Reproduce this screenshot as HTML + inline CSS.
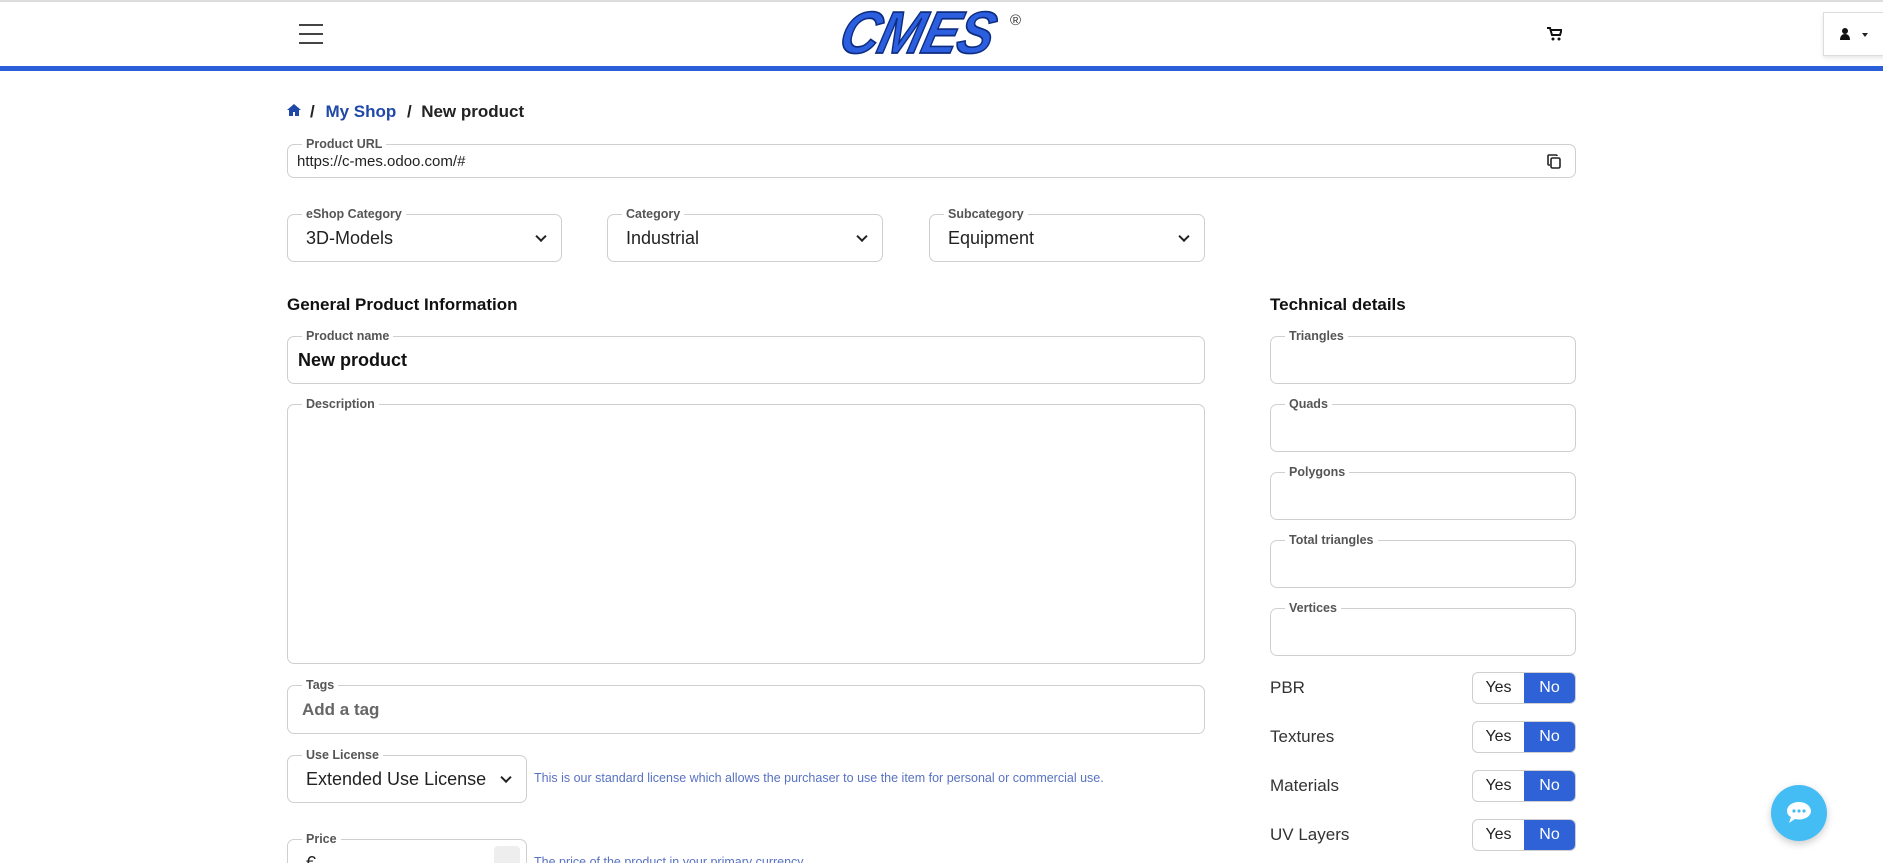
<!DOCTYPE html>
<html style="width:1883px;height:863px;overflow:hidden"><head><meta charset="utf-8"><style>
*{box-sizing:border-box;margin:0;padding:0}
body{width:1883px;height:863px;overflow:hidden;background:#fff;font-family:"Liberation Sans",sans-serif;color:#222;position:relative}
.abs{position:absolute}
.fld{position:absolute;border:1px solid #cfcfcf;border-radius:7px;background:#fff}
.lbl{position:absolute;top:-9px;left:14px;background:#fff;padding:0 4px;font-size:12.5px;color:#555;font-weight:bold;line-height:16px}
.val{position:absolute;left:18px;font-size:18px;color:#222}
.chev{position:absolute;right:16px;top:50%;width:8px;height:8px;border-right:2.5px solid #222;border-bottom:2.5px solid #222;transform:translateY(-70%) rotate(45deg)}
.h{position:absolute;font-size:17px;font-weight:bold;color:#111}
.tg{position:absolute;left:1472px;width:104px;height:32px;border:1px solid #cfcfcf;border-radius:6px;overflow:hidden;display:flex;font-size:16px}
.tg div{flex:1;display:flex;align-items:center;justify-content:center}
.tg .n{background:#2e62d6;color:#fff}
.tl{position:absolute;left:1270px;font-size:17px;color:#333}
.help{position:absolute;font-size:12.5px;color:#5872c2}
</style></head><body>
<div class="abs" style="left:0;top:0;width:1883px;height:2px;background:#ddd"></div>
<div class="abs" style="left:0;top:66px;width:1883px;height:5px;background:#2b5fd9"></div>
<div class="abs" style="left:299px;top:24px;width:24px;height:2px;background:#444"></div>
<div class="abs" style="left:299px;top:33px;width:24px;height:2px;background:#444"></div>
<div class="abs" style="left:299px;top:42px;width:24px;height:2px;background:#444"></div>
<div class="abs" style="left:850px;top:0px;font-size:54px;font-weight:bold;font-style:italic;color:#2c5fe0;-webkit-text-stroke:1.5px #0d2d80;letter-spacing:-1px;transform:skewX(-14deg) scaleY(1.1);transform-origin:left top;line-height:60px">CMES</div>
<div class="abs" style="left:1010px;top:12px;font-size:15px;color:#333">®</div>
<svg class="abs" style="left:1547px;top:27px" width="15" height="14" viewBox="0 0 15 14"><path d="M0 1h3l2 7h8l1.5-5H4" fill="none" stroke="#111" stroke-width="2"/><circle cx="6" cy="12" r="1.5" fill="#111"/><circle cx="12" cy="12" r="1.5" fill="#111"/></svg>
<div class="abs" style="left:1823px;top:12px;width:62px;height:44px;border:1px solid #ddd;background:#fff;box-shadow:0 2px 4px rgba(0,0,0,.1)"></div>
<svg class="abs" style="left:1840px;top:28px" width="10" height="12" viewBox="0 0 10 12"><circle cx="5" cy="3" r="3" fill="#111"/><path d="M0 12c0-4 2-6 5-6s5 2 5 6z" fill="#111"/></svg>
<div class="abs" style="left:1862px;top:33px;border-left:3.5px solid transparent;border-right:3.5px solid transparent;border-top:4px solid #222"></div>
<svg class="abs" style="left:287px;top:104px" width="14" height="12" viewBox="0 0 14 12"><path d="M7 0L0 6h2v6h4V8h2v4h4V6h2z" fill="#1f48a8"/></svg>
<div class="abs" style="left:310px;top:102px;font-size:17px;font-weight:bold;color:#222">/ <span style="color:#1f48a8;margin:0 6px">My Shop</span> / &nbsp;New product</div>
<div class="fld" style="left:287px;top:144px;width:1289px;height:34px"><div class="lbl">Product URL</div><div class="val" style="left:9px;top:8px;font-size:15px">https://c-mes.odoo.com/#</div>
<svg class="abs" style="right:14px;top:9px" width="14" height="15" viewBox="0 0 14 15"><rect x="4" y="4" width="9" height="10" rx="1.5" fill="none" stroke="#222" stroke-width="1.6"/><path d="M10 2V1.8A1 1 0 0 0 9 1H2A1 1 0 0 0 1 2v8a1 1 0 0 0 1 1h1" fill="none" stroke="#222" stroke-width="1.6"/></svg></div>
<div class="fld" style="left:287px;top:214px;width:275px;height:48px"><div class="lbl">eShop Category</div><div class="val" style="top:13px">3D-Models</div><div class="chev"></div></div>
<div class="fld" style="left:607px;top:214px;width:276px;height:48px"><div class="lbl">Category</div><div class="val" style="top:13px">Industrial</div><div class="chev"></div></div>
<div class="fld" style="left:929px;top:214px;width:276px;height:48px"><div class="lbl">Subcategory</div><div class="val" style="top:13px">Equipment</div><div class="chev"></div></div>
<div class="h" style="left:287px;top:295px">General Product Information</div>
<div class="h" style="left:1270px;top:295px">Technical details</div>
<div class="fld" style="left:287px;top:336px;width:918px;height:48px"><div class="lbl">Product name</div><div class="val" style="left:10px;top:13px;font-weight:bold;color:#111">New product</div></div>
<div class="fld" style="left:287px;top:404px;width:918px;height:260px"><div class="lbl">Description</div></div>
<div class="fld" style="left:287px;top:685px;width:918px;height:49px"><div class="lbl">Tags</div><div class="val" style="left:14px;top:14px;font-weight:bold;color:#666;font-size:17px">Add a tag</div></div>
<div class="fld" style="left:287px;top:755px;width:240px;height:48px"><div class="lbl">Use License</div><div class="val" style="top:13px">Extended Use License</div><div class="chev"></div></div>
<div class="help" style="left:534px;top:771px">This is our standard license which allows the purchaser to use the item for personal or commercial use.</div>
<div class="fld" style="left:287px;top:839px;width:240px;height:48px"><div class="lbl">Price</div><div class="val" style="top:13px">€</div><div class="abs" style="right:6px;top:6px;width:26px;height:36px;background:#eee;border-radius:4px"></div></div>
<div class="help" style="left:534px;top:855px">The price of the product in your primary currency</div>
<div class="fld" style="left:1270px;top:336px;width:306px;height:48px"><div class="lbl">Triangles</div></div>
<div class="fld" style="left:1270px;top:404px;width:306px;height:48px"><div class="lbl">Quads</div></div>
<div class="fld" style="left:1270px;top:472px;width:306px;height:48px"><div class="lbl">Polygons</div></div>
<div class="fld" style="left:1270px;top:540px;width:306px;height:48px"><div class="lbl">Total triangles</div></div>
<div class="fld" style="left:1270px;top:608px;width:306px;height:48px"><div class="lbl">Vertices</div></div>
<div class="tl" style="top:678px">PBR</div><div class="tg" style="top:672px"><div>Yes</div><div class="n">No</div></div>
<div class="tl" style="top:727px">Textures</div><div class="tg" style="top:721px"><div>Yes</div><div class="n">No</div></div>
<div class="tl" style="top:776px">Materials</div><div class="tg" style="top:770px"><div>Yes</div><div class="n">No</div></div>
<div class="tl" style="top:825px">UV Layers</div><div class="tg" style="top:819px"><div>Yes</div><div class="n">No</div></div>
<div class="abs" style="left:1771px;top:785px;width:56px;height:56px;border-radius:50%;background:#44bdf5;box-shadow:0 3px 8px rgba(0,0,0,.2)"></div>
<svg class="abs" style="left:1786px;top:801px" width="26" height="24" viewBox="0 0 26 24"><path d="M13 1C6 1 1 5 1 10c0 3 2 5 4 6l-2 6 6-4c1 0 2 .5 4 .5 7 0 12-4 12-8.5S20 1 13 1z" fill="#fff"/><circle cx="8" cy="10" r="1.6" fill="#44bdf5"/><circle cx="13" cy="10" r="1.6" fill="#44bdf5"/><circle cx="18" cy="10" r="1.6" fill="#44bdf5"/></svg>
</body></html>
